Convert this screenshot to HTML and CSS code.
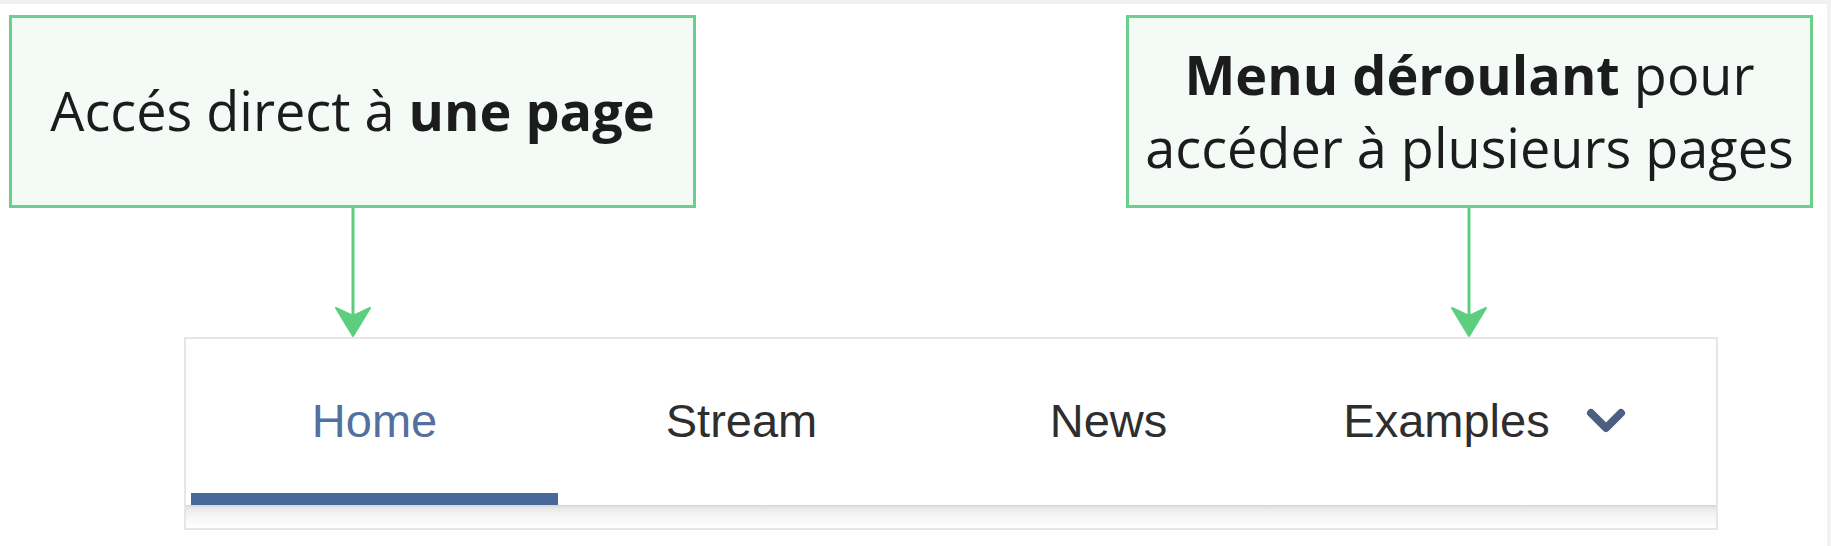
FILE: index.html
```html
<!DOCTYPE html>
<html lang="fr">
<head>
<meta charset="utf-8">
<title>Navigation</title>
<link rel="stylesheet" href="styles.css">
</head>
<body>
<div class="page">
  <div class="callouts">
    <div class="callout"><p>Accés direct à <strong>une page</strong></p></div>
    <div class="callout"><p><strong>Menu déroulant</strong> pour<br>accéder à plusieurs pages</p></div>
  </div>
  <div class="arrows">
    <svg class="arrow" width="38" height="129" viewBox="0 0 38 129"><line x1="19" y1="0" x2="19" y2="110" stroke="#5ccf7f" stroke-width="3"/><path d="M2 100 L19 128 L36 100 L19 108 Z" fill="#5ccf7f" stroke="#5ccf7f" stroke-width="2" stroke-linejoin="round"/></svg>
    <svg class="arrow" width="38" height="129" viewBox="0 0 38 129"><line x1="19" y1="0" x2="19" y2="110" stroke="#5ccf7f" stroke-width="3"/><path d="M2 100 L19 128 L36 100 L19 108 Z" fill="#5ccf7f" stroke="#5ccf7f" stroke-width="2" stroke-linejoin="round"/></svg>
  </div>
  <div class="nav">
    <div class="tabs">
      <div class="tab active">Home</div>
      <div class="tab">Stream</div>
      <div class="tab">News</div>
      <div class="tab dropdown">Examples<svg class="chev" width="40" height="26" viewBox="0 0 40 26"><path d="M5 5 L20 20 L35 5" fill="none" stroke="#4d5f80" stroke-width="8" stroke-linecap="round" stroke-linejoin="round"/></svg></div>
    </div>
    <div class="shade"></div>
  </div>
</div>
</body>
</html>
```

FILE: styles.css
```css
html, body {
  margin: 0;
  padding: 0;
  background: #ffffff;
}

.page {
  width: 1831px;
  height: 546px;
  box-sizing: border-box;
  border-top: 4px solid #f1f1f1;
  border-right: 4px solid #f2f2f2;
  padding-top: 11px;
}

.callouts {
  display: flex;
  justify-content: space-between;
  padding: 0 14px 0 9px;
}

.callout {
  width: 687px;
  height: 193px;
  box-sizing: border-box;
  border: 3px solid #6ccf8d;
  background: #f4fbf7;
  display: flex;
  align-items: center;
  justify-content: center;
  text-align: center;
}

.callout p {
  margin: 0;
  font-family: "Open Sans", "Noto Sans", sans-serif;
  font-size: 54px;
  line-height: 73px;
  color: #1c1c1c;
  padding-bottom: 2px;
}

.callout strong {
  font-weight: 700;
}

.arrows {
  display: flex;
  height: 129px;
  padding-left: 334px;
  gap: 1078px;
}

.arrow {
  display: block;
}

.nav {
  margin-left: 184px;
  width: 1534px;
  height: 193px;
  box-sizing: border-box;
  border: 2px solid #e6e6e6;
  display: flex;
  flex-direction: column;
}

.tabs {
  display: flex;
  height: 166px;
  padding-left: 5px;
  background: #ffffff;
}

.tab {
  width: 367px;
  box-sizing: border-box;
  display: flex;
  align-items: center;
  justify-content: center;
  font-family: "Liberation Sans", Arial, sans-serif;
  font-size: 47px;
  color: #2e2e2e;
  padding-bottom: 4px;
}

.tab.active {
  color: #54709f;
  border-bottom: 12px solid #46689a;
  padding-bottom: 0;
  padding-top: 8px;
}

.tab.dropdown {
  padding-left: 18px;
}

.chev {
  margin-left: 36px;
  margin-top: 2px;
}

.shade {
  flex: 1;
  background: linear-gradient(to bottom, #d4d4d4 0, #e8e8e8 3px, #f3f3f3 9px, #fbfbfb 18px, #ffffff 100%);
}
```
